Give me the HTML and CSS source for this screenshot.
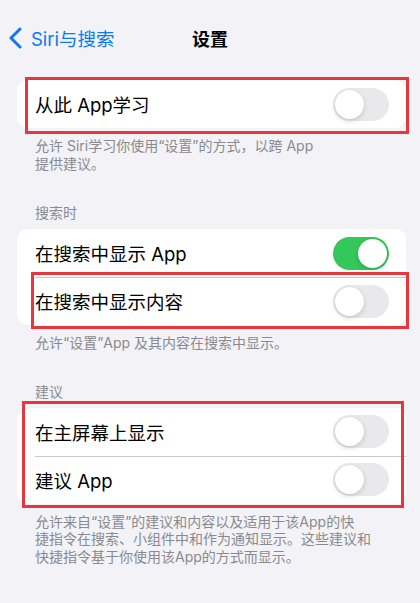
FILE: index.html
```html
<!DOCTYPE html>
<html lang="zh-CN">
<head>
  <meta charset="UTF-8" />
  <meta name="viewport" content="width=device-width, initial-scale=1.0"/>
  <title>设置</title>
  <link rel="stylesheet" href="styles.css">
</head>
<body>
  <div class="nav">
    <a class="back" href="#">
      <svg class="chevron" width="14" height="22" viewBox="0 0 14 22">
        <polyline points="11,2 2,11 11,20" fill="none" stroke="#0a7af3" stroke-width="3" stroke-linecap="round" stroke-linejoin="round"/>
      </svg>
      <span>Siri与搜索</span>
    </a>
    <div class="title">设置</div>
    <div></div>
  </div>

  <div class="card">
    <div class="row">
      <span>从此 App学习</span>
      <span class="toggle"></span>
    </div>
  </div>
  <p class="footer">允许 Siri学习你使用“设置”的方式，以跨 App<br>提供建议。</p>

  <p class="section">搜索时</p>
  <div class="card">
    <div class="row">
      <span>在搜索中显示 App</span>
      <span class="toggle on"></span>
    </div>
    <div class="row">
      <span>在搜索中显示内容</span>
      <span class="toggle"></span>
    </div>
  </div>
  <p class="footer">允许“设置”App 及其内容在搜索中显示。</p>

  <p class="section">建议</p>
  <div class="card">
    <div class="row">
      <span>在主屏幕上显示</span>
      <span class="toggle"></span>
    </div>
    <div class="row">
      <span>建议 App</span>
      <span class="toggle"></span>
    </div>
  </div>
  <p class="footer">允许来自“设置”的建议和内容以及适用于该App的快<br>捷指令在搜索、小组件中和作为通知显示。这些建议和<br>快捷指令基于你使用该App的方式而显示。</p>

  <!-- highlight frames drawn over the screenshot -->
  <div class="mark mark-1"></div>
  <div class="mark mark-2"></div>
  <div class="mark mark-3"></div>
</body>
</html>
```

FILE: styles.css
```css
body {
  font-family: "Inter", "Noto Sans CJK SC", sans-serif;
  background-color: #f2f2f7;
  color: #000;
  margin: 0;
  position: relative;
  min-height: 603px;
}

.nav {
  display: grid;
  grid-template-columns: 1fr auto 1fr;
  align-items: center;
  height: 36px;
  padding-top: 20px;
}

.back {
  display: flex;
  align-items: center;
  gap: 8px;
  padding-left: 9px;
  color: #0a7af3;
  text-decoration: none;
  font-size: 18.5px;
}

.title {
  font-size: 18px;
  font-weight: 600;
}

.card {
  background: #ffffff;
  border-radius: 11px;
  margin: 8px 14px 0 17px;
  overflow: hidden;
}

.nav + .card {
  margin-top: 24px;
}

.row {
  display: flex;
  align-items: center;
  justify-content: space-between;
  height: 48px;
  padding: 0 17px 0 18px;
  font-size: 18.5px;
  position: relative;
}

.row + .row::before {
  content: "";
  position: absolute;
  left: 18px;
  right: 0;
  top: 0;
  border-top: 0.5px solid #c8c8cc;
}

.toggle {
  width: 56px;
  height: 33px;
  border-radius: 17px;
  background: #e9e9eb;
  position: relative;
  flex-shrink: 0;
}

.toggle::after {
  content: "";
  position: absolute;
  top: 2px;
  left: 2px;
  width: 29px;
  height: 29px;
  border-radius: 50%;
  background: #ffffff;
  box-shadow: 0 2px 5px rgba(0,0,0,0.15), 0 0 1px rgba(0,0,0,0.1);
}

.toggle.on {
  background: #34c759;
}

.toggle.on::after {
  left: 25px;
}

.footer {
  margin: 0;
  padding: 9px 20px 0 35px;
  font-size: 14px;
  line-height: 17.5px;
  color: #8a8a8e;
}

.section {
  margin: 32px 0 0;
  padding-left: 35px;
  font-size: 14px;
  line-height: 17px;
  color: #8a8a8e;
}

.footer + .section + .card + .footer + .section {
  margin-top: 31px;
}

.mark {
  position: absolute;
  border: 3px solid #e5373d;
  box-sizing: border-box;
}

.mark-1 {
  left: 25px;
  top: 77px;
  width: 384px;
  height: 57px;
}

.mark-2 {
  left: 31px;
  top: 272px;
  width: 378px;
  height: 57px;
}

.mark-3 {
  left: 22px;
  top: 401px;
  width: 382px;
  height: 107px;
}
```
